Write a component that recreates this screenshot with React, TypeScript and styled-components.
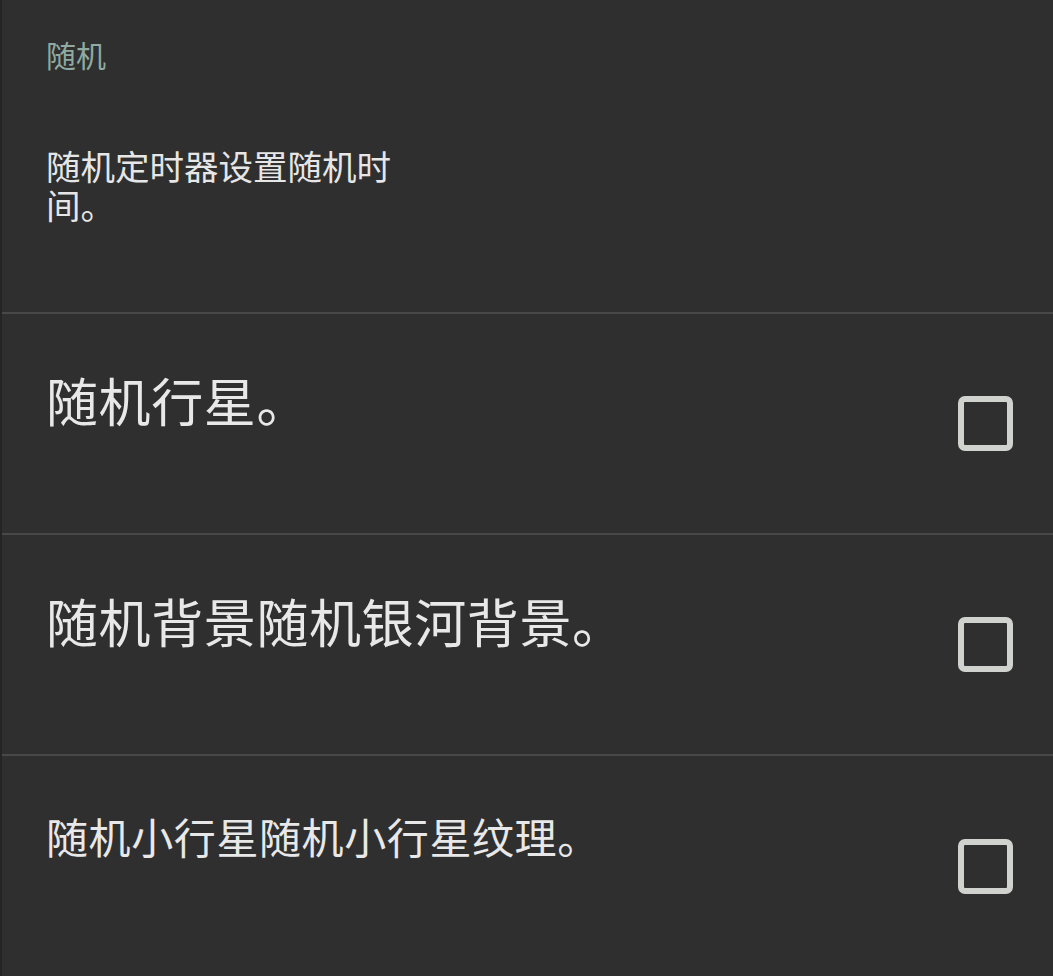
import React from 'react';
import styled, { createGlobalStyle } from 'styled-components';

const GlobalStyle = createGlobalStyle`
  html, body {
    margin: 0;
    padding: 0;
    background: #2f2f2f;
  }
  body {
    font-family: 'Noto Sans CJK SC', 'Noto Sans', sans-serif;
  }
`;

type Pref = {
  title: string;
  size: number;
};

const prefs: Pref[] = [
  { title: '随机行星。', size: 52 },
  { title: '随机背景随机银河背景。', size: 52 },
  { title: '随机小行星随机小行星纹理。', size: 42 },
];

const App = (): JSX.Element => {
  return (
    <>
      <GlobalStyle />
      <Screen>
        <Intro>
          <Category>随机</Category>
          <Description>随机定时器设置随机时间。</Description>
        </Intro>
        {prefs.map((p) => (
          <Row key={p.title}>
            <TextCol>
              <Title $size={p.size}>{p.title}</Title>
            </TextCol>
            <CheckBox role="checkbox" aria-checked="false" />
          </Row>
        ))}
      </Screen>
    </>
  );
};

const Screen = styled.div`
  width: 1053px;
  height: 976px;
  background: #2f2f2f;
  border-left: 2px solid #252525;
  box-sizing: border-box;
  overflow: hidden;
  display: flex;
  flex-direction: column;
`;

const Intro = styled.div`
  height: 314px;
  box-sizing: border-box;
  padding: 36px 0 0 44px;
  border-bottom: 2px solid #484848;
  flex-shrink: 0;
`;

const Category = styled.div`
  font-size: 30px;
  line-height: 36px;
  color: #8eaaa2;
`;

const Description = styled.div`
  margin-top: 74px;
  max-width: 365px;
  font-size: 34.5px;
  line-height: 39px;
  color: #e6e6e6;
`;

const Row = styled.div`
  height: 221px;
  box-sizing: border-box;
  flex-shrink: 0;
  display: flex;
  align-items: center;
  padding: 0 40px 0 44px;
  border-bottom: 2px solid #484848;

  &:last-child {
    border-bottom: none;
  }
`;

const TextCol = styled.div`
  flex: 1;
  align-self: flex-start;
  padding-top: 55px;
`;

const Title = styled.div<{ $size: number }>`
  font-size: ${({ $size }) => $size}px;
  line-height: 1.2;
  letter-spacing: 0.6px;
  color: #e8e8e8;
`;

const CheckBox = styled.div`
  width: 55px;
  height: 55px;
  box-sizing: border-box;
  border: 6px solid #cfd2cd;
  border-radius: 7px;
  flex-shrink: 0;
`;

export default App;
